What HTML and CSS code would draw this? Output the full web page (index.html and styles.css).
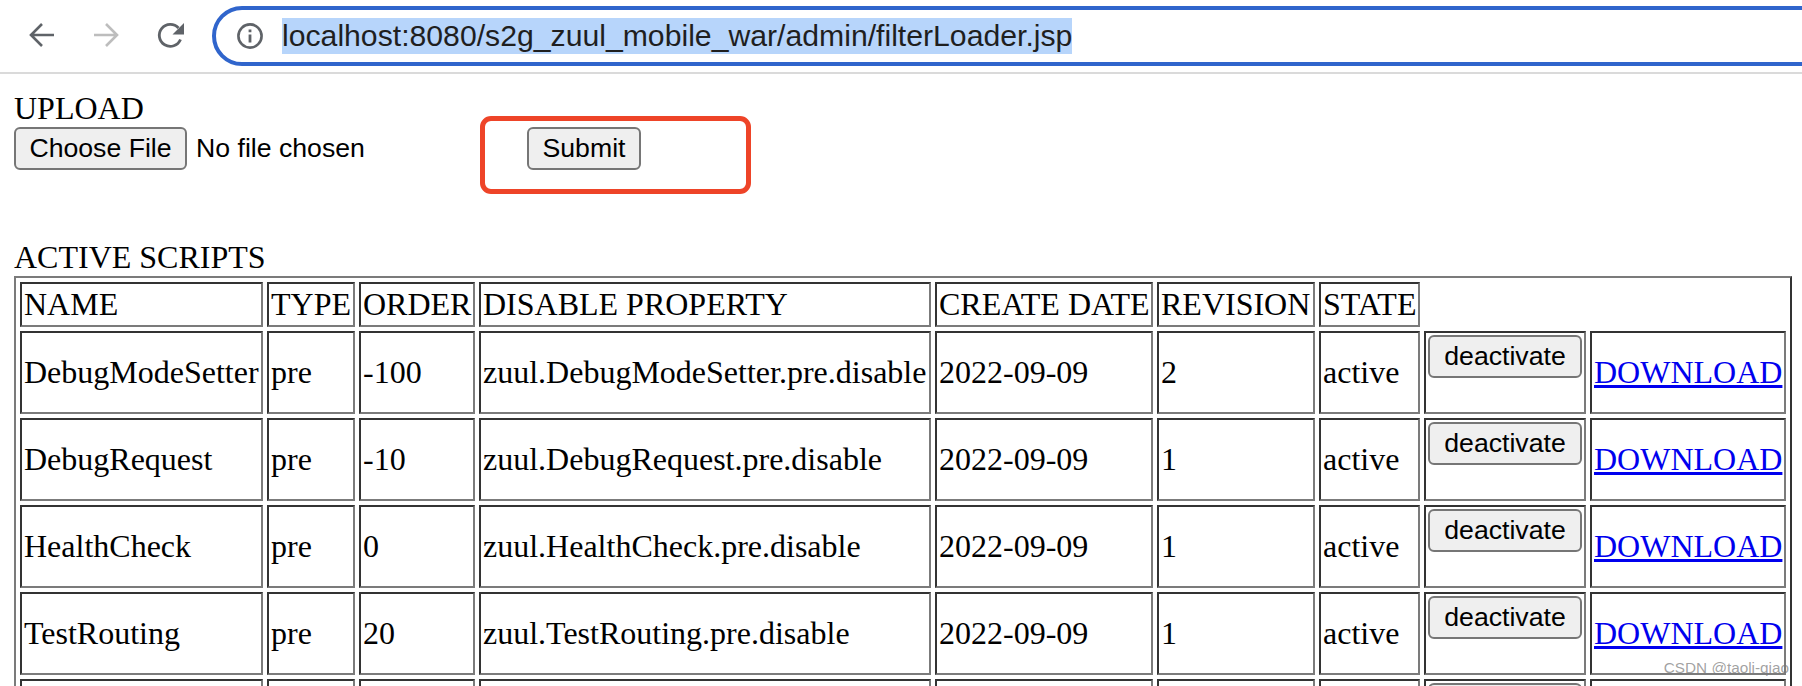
FILE: index.html
```html
<!DOCTYPE html>
<html lang="en">
<head>
<meta charset="utf-8">
<title>filterLoader</title>
<link rel="stylesheet" href="styles.css">
</head>
<body>
<header class="toolbar">
  <svg class="nav-icon" width="26" height="26" viewBox="0 0 26 26" fill="none" stroke="#5f6368" stroke-width="2.6"><path d="M25 13H2M13 2 2 13l11 11"/></svg>
  <svg class="nav-icon" width="26" height="26" viewBox="0 0 26 26" fill="none" stroke="#bdbdbd" stroke-width="2.6"><path d="M1 13h23M13 2l11 11-11 11"/></svg>
  <svg class="nav-icon" width="28" height="28" viewBox="0 0 28 28" fill="none"><path d="M23.5 17.5A11 11 0 1 1 21.5 6" stroke="#5f6368" stroke-width="2.8"/><path d="M27 1v11.5H15.500z" fill="#5f6368"/></svg>
  <div class="omnibox">
    <svg class="info-icon" width="28" height="28" viewBox="0 0 28 28" fill="none"><circle cx="14" cy="14" r="11.600" stroke="#5f6368" stroke-width="2.600"/><path d="M12.600 12.500h2.800v8h-2.800zM12.600 7.500h2.800v2.800h-2.800z" fill="#5f6368"/></svg>
    <span class="url">localhost:8080/s2g_zuul_mobile_war/admin/filterLoader.jsp</span>
  </div>
</header>
<main class="page">
  <div class="label">UPLOAD</div>
  <form class="upload-row">
    <div class="file-picker">
      <button type="button" class="btn btn-file">Choose File</button>
      <span class="file-name">No file chosen</span>
    </div>
    <button type="button" class="btn btn-submit">Submit</button>
    <div class="highlight-box"></div>
  </form>
  <div class="label section-title">ACTIVE SCRIPTS</div>
  <table class="scripts">
    <colgroup>
      <col class="c1"><col class="c2"><col class="c3"><col class="c4"><col class="c5"><col class="c6"><col class="c7"><col class="c8"><col class="c9">
    </colgroup>
    <tr>
      <td>NAME</td><td>TYPE</td><td>ORDER</td><td>DISABLE PROPERTY</td><td>CREATE DATE</td><td>REVISION</td><td>STATE</td>
    </tr>
    <tr class="row">
      <td>DebugModeSetter</td><td>pre</td><td>-100</td><td>zuul.DebugModeSetter.pre.disable</td><td>2022-09-09</td><td>2</td><td>active</td>
      <td class="action"><button type="button" class="btn btn-action">deactivate</button></td><td><a href="#">DOWNLOAD</a></td>
    </tr>
    <tr class="row">
      <td>DebugRequest</td><td>pre</td><td>-10</td><td>zuul.DebugRequest.pre.disable</td><td>2022-09-09</td><td>1</td><td>active</td>
      <td class="action"><button type="button" class="btn btn-action">deactivate</button></td><td><a href="#">DOWNLOAD</a></td>
    </tr>
    <tr class="row">
      <td>HealthCheck</td><td>pre</td><td>0</td><td>zuul.HealthCheck.pre.disable</td><td>2022-09-09</td><td>1</td><td>active</td>
      <td class="action"><button type="button" class="btn btn-action">deactivate</button></td><td><a href="#">DOWNLOAD</a></td>
    </tr>
    <tr class="row">
      <td>TestRouting</td><td>pre</td><td>20</td><td>zuul.TestRouting.pre.disable</td><td>2022-09-09</td><td>1</td><td>active</td>
      <td class="action"><button type="button" class="btn btn-action">deactivate</button></td><td><a href="#">DOWNLOAD</a></td>
    </tr>
    <tr class="row">
      <td></td><td></td><td></td><td></td><td></td><td></td><td></td>
      <td class="action"><button type="button" class="btn btn-action">deactivate</button></td><td></td>
    </tr>
  </table>
</main>
<div class="watermark">CSDN @taoli-qiao</div>
</body>
</html>
```

FILE: styles.css
```css
html, body {
  margin: 0;
  height: 686px;
  overflow: hidden;
  background: #fff;
}
body {
  position: relative;
  font-family: "Liberation Serif", serif;
  font-size: 32px;
  color: #000;
}
.toolbar {
  box-sizing: border-box;
  height: 74px;
  border-bottom: 2px solid #dadada;
  padding-top: 6px;
  padding-left: 29px;
  display: flex;
  align-items: flex-start;
}
.nav-icon {
  flex: none;
  margin-top: 16px;
  margin-right: 38px;
}
.omnibox {
  box-sizing: border-box;
  flex: 1;
  height: 60px;
  margin-left: -11px;
  margin-right: -40px;
  border: 4px solid #3065cc;
  border-radius: 30px;
  padding-left: 20px;
  display: flex;
  align-items: center;
}
.info-icon {
  flex: none;
  margin-right: 18px;
}
.url {
  font-family: "Liberation Sans", sans-serif;
  font-size: 30.2px;
  line-height: 36px;
  color: #1f1f1f;
  background: #b7d5fb;
}
.page {
  padding: 16px 0 0 14px;
}
.label {
  line-height: 37px;
}
.upload-row {
  position: relative;
  display: flex;
  align-items: flex-start;
}
.file-picker {
  width: 513px;
  display: flex;
  align-items: flex-start;
  gap: 9px;
}
.file-name {
  font-family: "Liberation Sans", sans-serif;
  font-size: 26.67px;
  line-height: 42px;
}
.btn {
  box-sizing: border-box;
  height: 43px;
  padding: 0;
  font-family: "Liberation Sans", sans-serif;
  font-size: 26.67px;
  color: #000;
  background: #efefef;
  border: 2px solid #767676;
  border-radius: 6px;
}
.btn-file { width: 173px; }
.btn-submit { width: 114px; }
.btn-action { display: block; width: 154px; }
.highlight-box {
  position: absolute;
  left: 466px;
  top: -11px;
  width: 271px;
  height: 78px;
  box-sizing: border-box;
  border: 5px solid #ee4428;
  border-radius: 11px;
}
.section-title {
  margin-top: 69px;
}
.scripts {
  table-layout: fixed;
  width: 1778px;
  border-collapse: separate;
  border-spacing: 4px;
  border: 2px solid;
  border-color: #7b7b7b #333 #333 #7b7b7b;
}
.scripts td {
  padding: 2px;
  border: 2px solid;
  border-color: #333 #7b7b7b #7b7b7b #333;
  line-height: 37px;
  white-space: nowrap;
  overflow: visible;
}
.row td { height: 75px; }
.scripts .action { vertical-align: top; }
.c1 { width: 243px; }
.c2 { width: 88px; }
.c3 { width: 116px; }
.c4 { width: 452px; }
.c5 { width: 218px; }
.c6 { width: 158px; }
.c7 { width: 101px; }
.c8 { width: 162px; }
.c9 { width: 196px; }
a { color: #0000ee; }
.watermark {
  position: absolute;
  right: 13px;
  top: 659px;
  font-family: "Liberation Sans", sans-serif;
  font-size: 15.3px;
  color: rgba(120, 120, 120, 0.7);
}
```
